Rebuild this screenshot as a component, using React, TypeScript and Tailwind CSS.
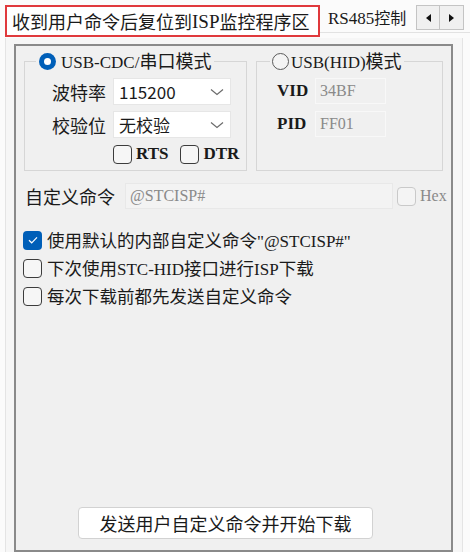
import React from "react";

const M = ({ children, className = "" }: { children: React.ReactNode; className?: string }) => (
  <span className={"font-['Liberation_Serif',serif] " + className}>{children}</span>
);

const Chevron = () => (
  <svg width="14" height="8" viewBox="0 0 14 8" className="shrink-0">
    <path d="M1 1.5 L7 6.5 L13 1.5" fill="none" stroke="#6b6b6b" strokeWidth="1.2" />
  </svg>
);

const Box = ({ checked = false, disabled = false }: { checked?: boolean; disabled?: boolean }) =>
  checked ? (
    <div className="w-[19px] h-[19px] rounded-[4px] bg-[#005fb8] flex items-center justify-center shrink-0">
      <svg width="12" height="10" viewBox="0 0 12 10">
        <path d="M2 5.2 L4.7 7.8 L10 2.4" fill="none" stroke="#fff" strokeWidth="1.2" />
      </svg>
    </div>
  ) : (
    <div
      className={
        "w-[19px] h-[19px] rounded-[4px] border shrink-0 " +
        (disabled ? "border-[#c9c9c9] bg-[#f4f4f4]" : "border-[#3c3c3c] bg-[#f6f6f6]")
      }
    />
  );

export default function App() {
  return (
    <div className="w-[470px] h-[552px] bg-[#fbfbfb] flex flex-col overflow-hidden text-[#1a1a1a] font-['Noto_Sans_CJK_SC',sans-serif]">
      {/* tab header */}
      <div className="flex h-[38px] shrink-0">
        <div className="ml-[5px] mt-[5px] w-[315px] h-[32px] border-2 border-[#e0393c] bg-white flex items-center pl-[5px] text-[18px] leading-none whitespace-nowrap">
          收到用户命令后复位到<M className="text-[19px]">ISP</M>监控程序区
        </div>
        <div className="flex-1 h-[33px] border-b border-[#e2e2e2] flex items-start">
          <span className="ml-[8px] mt-[9px] text-[16px] leading-none whitespace-nowrap">
            <M className="text-[17px]">RS485</M>控制
          </span>
          <div className="ml-auto mr-[6px] mt-[5px] flex">
            <div className="w-[24px] h-[25px] border border-[#c4c4c4] bg-[#f0f0f0] flex items-center justify-center">
              <svg width="5" height="8" viewBox="0 0 5 8"><path d="M5 0 L0 4 L5 8 Z" fill="#111" /></svg>
            </div>
            <div className="w-[24px] h-[25px] border border-l-0 border-[#c4c4c4] bg-[#f0f0f0] flex items-center justify-center">
              <svg width="5" height="8" viewBox="0 0 5 8"><path d="M0 0 L5 4 L0 8 Z" fill="#111" /></svg>
            </div>
          </div>
        </div>
      </div>

      {/* tab body */}
      <div className="flex-1 ml-[5px] mr-[7px] border-l border-r border-[#e4e4e4] bg-[#f6f6f6] pl-[8px] pr-[9px] pt-[6px] flex flex-col">
        <div className="flex-1 border-2 border-[#8a8a8a] bg-[#f0f0f0] pt-[5px] flex flex-col">
          {/* groups */}
          <div className="flex gap-[9px] px-[8px]">
            <fieldset className="w-[223px] border border-[#d6d6d6] pb-[7px]">
              <legend className="ml-[11px] px-[3px] flex items-center gap-[5px] h-[20px] text-[18px] leading-none whitespace-nowrap">
                <div className="w-[17px] h-[17px] rounded-full bg-[#005fb8] flex items-center justify-center">
                  <div className="w-[7px] h-[7px] rounded-full bg-white" />
                </div>
                <span>
                  <M className="text-[17px]">USB-CDC/</M>串口模式
                </span>
              </legend>
              <div className="pl-[27px] pt-[7px] flex flex-col gap-[6px]">
                <div className="flex items-center">
                  <span className="w-[56px] text-[18px] leading-none whitespace-nowrap">波特率</span>
                  <div className="ml-[5px] w-[118px] h-[27px] bg-white border border-[#e6e6e6] flex items-center pl-[5px] pr-[6px] justify-between text-[17px]">
                    <span>115200</span>
                    <Chevron />
                  </div>
                </div>
                <div className="flex items-center">
                  <span className="w-[56px] text-[18px] leading-none whitespace-nowrap">校验位</span>
                  <div className="ml-[5px] w-[118px] h-[27px] bg-white border border-[#e6e6e6] flex items-center pl-[5px] pr-[6px] justify-between text-[17px]">
                    <span>无校验</span>
                    <Chevron />
                  </div>
                </div>
                <div className="flex items-center ml-[61px] mt-[1px] h-[18px]">
                  <Box />
                  <M className="ml-[4px] text-[17px] font-bold">RTS</M>
                  <div className="ml-[12px]"><Box /></div>
                  <M className="ml-[4px] text-[17px] font-bold">DTR</M>
                </div>
              </div>
            </fieldset>

            <fieldset className="w-[187px] border border-[#d6d6d6] pb-[7px]">
              <legend className="ml-[13px] px-[2px] flex items-center gap-[2px] h-[20px] text-[18px] leading-none whitespace-nowrap">
                <div className="w-[17px] h-[17px] rounded-full border border-[#5a5a5a] bg-[#f4f4f4]" />
                <span>
                  <M className="text-[17px]">USB(HID)</M>模式
                </span>
              </legend>
              <div className="pl-[20px] pt-[7px] flex flex-col gap-[7px]">
                <div className="flex items-center">
                  <M className="w-[38px] text-[17px] font-bold">VID</M>
                  <div className="w-[71px] h-[26px] border border-[#f8f8f8] bg-[#f0f0f0] flex items-center pl-[4px]">
                    <M className="text-[16px] text-[#8a8a8a]">34BF</M>
                  </div>
                </div>
                <div className="flex items-center">
                  <M className="w-[38px] text-[17px] font-bold">PID</M>
                  <div className="w-[71px] h-[26px] border border-[#f8f8f8] bg-[#f0f0f0] flex items-center pl-[4px]">
                    <M className="text-[16px] text-[#8a8a8a]">FF01</M>
                  </div>
                </div>
              </div>
            </fieldset>
          </div>

          {/* custom command */}
          <div className="flex items-center pl-[9px] mt-[12px]">
            <span className="w-[100px] text-[18px] leading-none whitespace-nowrap">自定义命令</span>
            <div className="w-[268px] h-[26px] border border-[#e8e8e8] bg-[#f3f3f3] flex items-center pl-[4px]">
              <M className="text-[16px] text-[#8a8a8a]">@STCISP#</M>
            </div>
            <div className="ml-[4px]"><Box disabled /></div>
            <M className="ml-[4px] text-[16px] text-[#8a8a8a]">Hex</M>
          </div>

          {/* options */}
          <div className="mt-[21px] pl-[7px] flex flex-col gap-[8px]">
            <div className="flex items-center h-[20px] gap-[5px]">
              <Box checked />
              <span className="text-[17.5px] leading-none whitespace-nowrap">
                使用默认的内部自定义命令<M className="text-[17px]">"@STCISP#"</M>
              </span>
            </div>
            <div className="flex items-center h-[20px] gap-[5px]">
              <Box />
              <span className="text-[17.5px] leading-none whitespace-nowrap">
                下次使用<M className="text-[17px]">STC-HID</M>接口进行<M className="text-[17px]">ISP</M>下载
              </span>
            </div>
            <div className="flex items-center h-[20px] gap-[5px]">
              <Box />
              <span className="text-[17.5px] leading-none whitespace-nowrap">每次下载前都先发送自定义命令</span>
            </div>
          </div>

          {/* button */}
          <div className="mt-auto mb-[11px] ml-[62px] w-[295px] h-[32px] bg-white border border-[#d2d2d2] rounded-[4px] flex items-center justify-center text-[18px] leading-none">
            发送用户自定义命令并开始下载
          </div>
        </div>
      </div>
    </div>
  );
}
